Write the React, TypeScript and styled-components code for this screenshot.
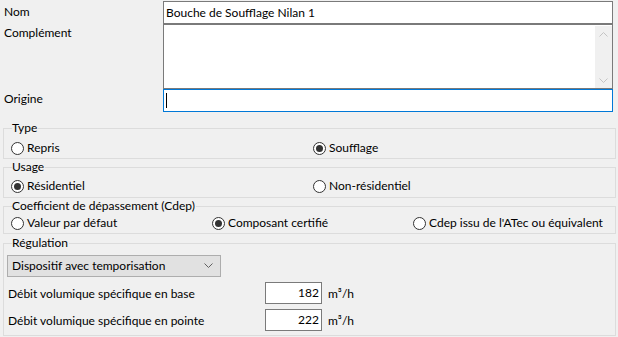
import React from "react";
import styled, { createGlobalStyle } from "styled-components";

const Global = createGlobalStyle`
  html, body { margin: 0; padding: 0; background: #f0f0f0; }
  body { font-family: Lato, "Liberation Sans", sans-serif; font-size: 12px; color: #000; }
  * { box-sizing: border-box; }
`;

const Page = styled.div`
  width: 618px;
  height: 337px;
  background: #f0f0f0;
  padding: 1px 0 0 0;
  overflow: hidden;
`;

const TopGrid = styled.div`
  display: grid;
  grid-template-columns: 163px 450px;
  grid-template-rows: 23px 65px 23px;
  margin-bottom: 8px;
`;

const Label = styled.div<{ $top?: number }>`
  padding-left: 4px;
  padding-top: ${(p) => p.$top ?? 3}px;
  line-height: 16px;
  white-space: nowrap;
`;

const TextBox = styled.div<{ $focused?: boolean }>`
  border: 1px solid ${(p) => (p.$focused ? "#0078d7" : "#7a7a7a")};
  background: #fff;
  height: 100%;
  display: flex;
  align-items: center;
  padding-left: 2px;
  line-height: 16px;
  white-space: nowrap;
`;

const Caret = styled.span`
  display: inline-block;
  width: 1px;
  height: 15px;
  background: #000;
`;

const TextArea = styled.div`
  border: 1px solid #7a7a7a;
  background: #fff;
  height: 100%;
  display: flex;
  justify-content: flex-end;
  padding: 1px 0 0 0;
`;

const ScrollBar = styled.div`
  width: 17px;
  background: #f0f0f0;
  display: flex;
  flex-direction: column;
  justify-content: space-between;
  align-items: center;
  padding: 5px 0 4px;
`;

const Group = styled.fieldset<{ $pt: number; $pb: number; $mt?: number }>`
  margin: ${(p) => p.$mt ?? 0}px 2px 0 3px;
  border: 1px solid #dcdcdc;
  padding: ${(p) => p.$pt}px 3px ${(p) => p.$pb}px 3px;
  min-width: 0;
`;

const Legend = styled.legend`
  padding: 0 1px 0 0;
  margin-left: 5px;
  line-height: 16px;
  height: 16px;
`;

const RadioRow = styled.div<{ $cols: string }>`
  display: grid;
  grid-template-columns: ${(p) => p.$cols};
  height: 16px;
  align-items: center;
  margin-left: 4px;
`;

const RadioItem = styled.label`
  display: flex;
  align-items: center;
  gap: 3px;
  white-space: nowrap;
  line-height: 16px;
`;

const RadioCircle = styled.span<{ $checked?: boolean }>`
  width: 13px;
  height: 13px;
  border-radius: 50%;
  border: 1px solid #333;
  background: #fff;
  display: inline-flex;
  align-items: center;
  justify-content: center;
  flex: none;
  &::after {
    content: "";
    width: 7px;
    height: 7px;
    border-radius: 50%;
    background: ${(p) => (p.$checked ? "#333" : "transparent")};
  }
`;

const Select = styled.div`
  width: 214px;
  height: 22px;
  border: 1px solid #adadad;
  background: #e1e1e1;
  display: flex;
  align-items: center;
  justify-content: space-between;
  padding: 0 7px 0 4px;
  margin-top: 4px;
  line-height: 16px;
`;

const FieldRow = styled.div<{ $mt: number }>`
  display: grid;
  grid-template-columns: 257px 57px auto;
  align-items: center;
  margin-top: ${(p) => p.$mt}px;
  padding-left: 1px;
  height: 22px;
`;

const NumBox = styled.div`
  border: 1px solid #7a7a7a;
  background: #fff;
  height: 22px;
  display: flex;
  align-items: center;
  justify-content: flex-end;
  padding-right: 2px;
  line-height: 16px;
`;

const Unit = styled.span`
  padding-left: 6px;
`;

const Chevron = ({ dir, color }: { dir: "up" | "down"; color: string }) => (
  <svg width="9" height="6" viewBox="0 0 9 6">
    <path
      d={dir === "up" ? "M0.5 5.5 L4.5 1.5 L8.5 5.5" : "M0.5 0.5 L4.5 4.5 L8.5 0.5"}
      fill="none"
      stroke={color}
      strokeWidth="1"
    />
  </svg>
);

type R = { label: string; checked?: boolean };

const Radios = ({ items, cols }: { items: R[]; cols: string }) => (
  <RadioRow $cols={cols}>
    {items.map((it) => (
      <RadioItem key={it.label}>
        <RadioCircle $checked={it.checked} />
        {it.label}
      </RadioItem>
    ))}
  </RadioRow>
);

export default function App() {
  return (
    <>
      <Global />
      <Page>
        <TopGrid>
          <Label>Nom</Label>
          <TextBox>Bouche de Soufflage Nilan 1</TextBox>
          <Label $top={1}>Complément</Label>
          <TextArea>
            <ScrollBar>
              <Chevron dir="up" color="#c4c4c4" />
              <Chevron dir="down" color="#c4c4c4" />
            </ScrollBar>
          </TextArea>
          <Label $top={2}>Origine</Label>
          <TextBox $focused>
            <Caret />
          </TextBox>
        </TopGrid>

        <Group $pt={4} $pb={2}>
          <Legend>Type</Legend>
          <Radios cols="302px auto" items={[{ label: "Repris" }, { label: "Soufflage", checked: true }]} />
        </Group>
        <Group $pt={3} $pb={3}>
          <Legend>Usage</Legend>
          <Radios
            cols="302px auto"
            items={[{ label: "Résidentiel", checked: true }, { label: "Non-résidentiel" }]}
          />
        </Group>
        <Group $pt={1} $pb={2}>
          <Legend>Coefficient de dépassement (Cdep)</Legend>
          <Radios
            cols="201px 201px auto"
            items={[
              { label: "Valeur par défaut" },
              { label: "Composant certifié", checked: true },
              { label: "Cdep issu de l'ATec ou équivalent" },
            ]}
          />
        </Group>
        <Group $pt={0} $pb={4} $mt={1}>
          <Legend>Régulation</Legend>
          <Select>
            <span>Dispositif avec temporisation</span>
            <Chevron dir="down" color="#606060" />
          </Select>
          <FieldRow $mt={5}>
            <span>Débit volumique spécifique en base</span>
            <NumBox>182</NumBox>
            <Unit>m³/h</Unit>
          </FieldRow>
          <FieldRow $mt={5}>
            <span>Débit volumique spécifique en pointe</span>
            <NumBox>222</NumBox>
            <Unit>m³/h</Unit>
          </FieldRow>
        </Group>
      </Page>
    </>
  );
}
